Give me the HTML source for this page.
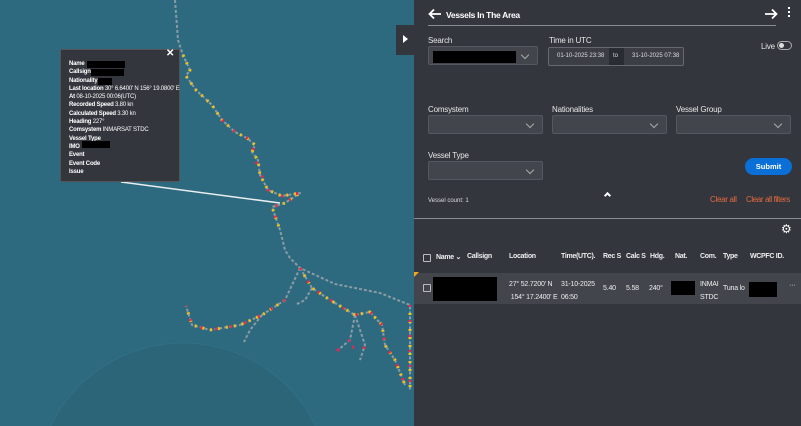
<!DOCTYPE html>
<html><head><meta charset="utf-8"><style>
*{margin:0;padding:0;box-sizing:border-box}
html,body{width:801px;height:426px;overflow:hidden}
body{position:relative;background:#2e6a7f;font-family:"Liberation Sans",sans-serif;color:#e8e8ea}
.a{position:absolute}
.pn{left:414px;top:0;width:387px;height:426px;background:#34363e}
.lbl{font-size:8px;color:#e6e6e6;letter-spacing:-.2px}
.sel{background:#43454d;border:1px solid #555760;border-radius:2px;height:19px}
.sel:after{content:"";position:absolute;right:9px;top:5px;width:5px;height:5px;border-right:1px solid #aaa;border-bottom:1px solid #aaa;transform:rotate(45deg)}
.bl{background:#000}
.tt{font-size:6px;color:#fff;line-height:8.3px;font-weight:bold;letter-spacing:-.2px}
.tt span{font-weight:normal}
.th{font-size:7px;font-weight:bold;color:#eee;top:253px;letter-spacing:-.3px}
.td{font-size:7px;color:#eee;letter-spacing:-.2px}
.cb{width:8px;height:8px;border:1px solid #bbb;border-radius:1px}
</style></head><body>
<svg class="a" style="left:0;top:0" width="414" height="426">
<circle cx="183" cy="490" r="147" fill="#2c6478" stroke="#2f7088" stroke-width="1"/>
<g fill="none" stroke-linejoin="round">
<g stroke="#8a9ba3" stroke-width="2" stroke-dasharray="3 2">
<polyline points="175,0 178,40 183,55 190,70 186,76 196,90 212,105 222,120 235,132 247,138 255,145 252,152 258,160 260,175 268,190 282,196 300,193 285,203 272,207 280,230 285,250 290,258 300,268 335,284 380,293 410,305 410,390"/>
<polyline points="300,268 312,288 330,300 355,315 370,312 382,325 385,345 395,360 405,385"/>
<polyline points="300,268 285,300 262,315 240,325 210,330 192,325 186,306"/>
<polyline points="312,288 305,300 295,305"/>
<polyline points="355,315 350,340 338,350"/>
<polyline points="355,315 365,345 360,360"/>
<polyline points="262,315 250,330 244,342"/>
</g>
<g stroke="#f2c21a" stroke-width="3" stroke-dasharray="2 6">
<polyline points="183,55 190,70 186,76 196,90 212,105 222,120 235,132 247,138 255,145 252,152 258,160 260,175 268,190 282,196 300,193 285,203 272,207 280,230"/>
<polyline points="300,268 312,288 330,300 355,315 370,312 382,325 385,345 395,360 405,385"/>
<polyline points="285,300 262,315 240,325 210,330 192,325 186,306"/>
<polyline points="410,305 410,390"/>
</g>
<g stroke="#e8264e" stroke-width="3" stroke-dasharray="2 13">
<polyline points="222,120 235,132 247,138 255,145 252,152 268,190 282,196 300,193 285,203 272,207 280,230"/>
<polyline points="300,268 312,288 330,300 355,315 370,312 382,325 385,345 395,360 405,385"/>
<polyline points="285,300 262,315 240,325 210,330 192,325 186,306"/>
<polyline points="410,305 410,390"/>
<polyline points="350,340 338,350 365,345 360,360"/>
</g>
</g>
<line x1="121" y1="182" x2="280" y2="203" stroke="#e8eef0" stroke-width="1.5"/>
</svg>
<div class="a" style="left:60px;top:49px;width:120px;height:133px;background:#34363e;border:1px solid #555"></div>
<div class="a" style="left:166px;top:48px;color:#fff;font-size:10px;font-weight:bold">✕</div>
<div class="a tt" style="left:69px;top:60px">
Name <br>Callsign <br>Nationality <br>Last location <span>30° 6.6400' N 156° 19.0800' E</span><br>At <span>08-10-2025 00:06(UTC)</span><br>Recorded Speed <span>3.80 kn</span><br>Calculated Speed <span>3.30 kn</span><br>Heading <span>227°</span><br>Comsystem <span>INMARSAT STDC</span><br>Vessel Type<br>IMO <br>Event<br>Event Code<br>Issue
</div>
<div class="a bl" style="left:87px;top:61px;width:38px;height:7px"></div>
<div class="a bl" style="left:91px;top:69px;width:33px;height:7px"></div>
<div class="a bl" style="left:98px;top:78px;width:14px;height:7px"></div>
<div class="a bl" style="left:82px;top:141px;width:28px;height:7px"></div>
<div class="a" style="left:396px;top:25px;width:18px;height:30px;background:#34363e"></div>
<div class="a" style="left:403px;top:35px;width:0;height:0;border-left:5px solid #fff;border-top:4px solid transparent;border-bottom:4px solid transparent"></div>
<div class="a pn"></div>
<svg class="a" style="left:428px;top:8px" width="14" height="12"><path d="M13 6H2M6 1.5L1.5 6 6 10.5" stroke="#fff" stroke-width="1.8" fill="none"/></svg>
<div class="a" style="left:446px;top:10px;font-size:8.5px;font-weight:bold;color:#fff;letter-spacing:-.3px">Vessels In The Area</div>
<svg class="a" style="left:764px;top:8px" width="14" height="12"><path d="M1 6H12M8 1.5L12.5 6 8 10.5" stroke="#fff" stroke-width="1.8" fill="none"/></svg>
<div class="a" style="left:788px;top:7px;width:2px;height:2px;background:#fff;box-shadow:0 4px #fff,0 8px #fff"></div>
<div class="a" style="left:428px;top:25px;width:348px;height:1px;background:#8a8c92"></div>
<div class="a lbl" style="left:428px;top:36px">Search</div>
<div class="a sel" style="left:428px;top:46px;width:110px"></div>
<div class="a bl" style="left:433px;top:51px;width:83px;height:12px"></div>
<div class="a lbl" style="left:549px;top:36px">Time in UTC</div>
<div class="a" style="left:548px;top:47px;width:136px;height:19px;border:1px solid #666870;border-radius:2px;background:#3c3e46"></div>
<div class="a" style="left:609px;top:48px;width:15px;height:17px;background:#2a2c33"></div>
<div class="a" style="left:557px;top:53px;font-size:6px;color:#ddd">01-10-2025 23:38</div>
<div class="a" style="left:613px;top:53px;font-size:6px;color:#ddd">to</div>
<div class="a" style="left:632px;top:53px;font-size:6px;color:#ddd">31-10-2025 07:38</div>
<div class="a lbl" style="left:761px;top:42px">Live</div>
<div class="a" style="left:777px;top:41px;width:15px;height:9px;border:1px solid #aaa;border-radius:5px"></div>
<div class="a" style="left:779px;top:43px;width:5px;height:5px;border-radius:50%;background:#ddd"></div>
<div class="a lbl" style="left:428px;top:105px">Comsystem</div>
<div class="a sel" style="left:428px;top:115px;width:115px"></div>
<div class="a lbl" style="left:552px;top:105px">Nationalities</div>
<div class="a sel" style="left:552px;top:115px;width:115px"></div>
<div class="a lbl" style="left:676px;top:105px">Vessel Group</div>
<div class="a sel" style="left:676px;top:115px;width:115px"></div>
<div class="a lbl" style="left:428px;top:151px">Vessel Type</div>
<div class="a sel" style="left:428px;top:161px;width:115px"></div>
<div class="a" style="left:745px;top:158px;width:47px;height:17px;border-radius:9px;background:#0a6fd6;color:#fff;font-size:7.5px;font-weight:bold;text-align:center;line-height:17px">Submit</div>
<div class="a" style="left:605px;top:193px;width:5px;height:5px;border-left:2px solid #fff;border-top:2px solid #fff;transform:rotate(45deg)"></div>
<div class="a" style="left:428px;top:198px;font-size:6px;color:#ddd">Vessel count: 1</div>
<div class="a" style="left:710px;top:195px;font-size:8px;color:#e36a3c;letter-spacing:-.3px">Clear all</div>
<div class="a" style="left:746px;top:195px;font-size:8px;color:#e36a3c;letter-spacing:-.4px">Clear all filters</div>
<div class="a" style="left:414px;top:218px;width:387px;height:1px;background:#8a8c92"></div>
<div class="a" style="left:781px;top:222px;font-size:12px;color:#fff">⚙</div>
<div class="a cb" style="left:423px;top:254px"></div>
<div class="a th" style="left:436px">Name ⌄</div>
<div class="a th" style="left:467px">Callsign</div>
<div class="a th" style="left:509px">Location</div>
<div class="a th" style="left:561px">Time(UTC).</div>
<div class="a th" style="left:603px">Rec S</div>
<div class="a th" style="left:626px">Calc S</div>
<div class="a th" style="left:650px">Hdg.</div>
<div class="a th" style="left:675px">Nat.</div>
<div class="a th" style="left:700px">Com.</div>
<div class="a th" style="left:723px">Type</div>
<div class="a th" style="left:750px">WCPFC ID.</div>
<div class="a" style="left:414px;top:273px;width:387px;height:31px;background:#43454d"></div>
<div class="a" style="left:414px;top:272px;width:0;height:0;border-left:5px solid #f2a91a;border-bottom:5px solid transparent"></div>
<div class="a cb" style="left:423px;top:284px"></div>
<div class="a bl" style="left:433px;top:277px;width:64px;height:24px"></div>
<div class="a td" style="left:509px;top:278px;line-height:13px">27° 52.7200' N<br>&nbsp;154° 17.2400' E</div>
<div class="a td" style="left:561px;top:278px;line-height:13px">31-10-2025<br>06:50</div>
<div class="a td" style="left:603px;top:285px">5.40</div>
<div class="a td" style="left:626px;top:285px">5.58</div>
<div class="a td" style="left:649px;top:285px">240°</div>
<div class="a bl" style="left:671px;top:281px;width:24px;height:14px"></div>
<div class="a td" style="left:700px;top:278px;line-height:13px">INMAI<br>STDC</div>
<div class="a td" style="left:723px;top:285px">Tuna lo</div>
<div class="a bl" style="left:749px;top:282px;width:28px;height:15px"></div>
<div class="a td" style="left:789px;top:282px">···</div>
</body></html>
